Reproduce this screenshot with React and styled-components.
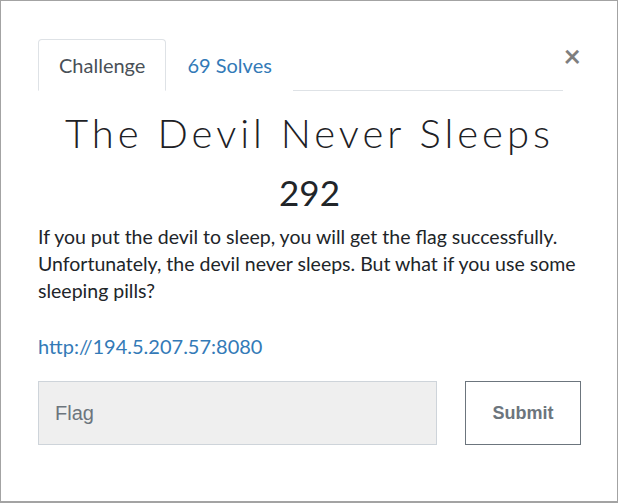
import React from "react";
import styled, { createGlobalStyle } from "styled-components";

const Global = createGlobalStyle`
  html, body { margin: 0; padding: 0; background: #fff; }
  body { font-family: Lato, "Open Sans", sans-serif; color: #212529; }
  * { box-sizing: border-box; }
`;

const Modal = styled.div`
  width: 618px;
  height: 503px;
  border: 1px solid #a3a3a3;
  border-bottom-width: 2px;
  padding: 38px 36px 0 37px;
  background: #fff;
`;

const HeaderRow = styled.div`
  display: flex;
  align-items: flex-start;
`;

const Tabs = styled.nav`
  flex: 1;
  display: flex;
  border-bottom: 1px solid #dee2e6;
`;

const Tab = styled.a`
  display: block;
  padding: 10px 20px;
  font-size: 20px;
  line-height: 30px;
  border: 1px solid ${(p) => (p.$active ? "#dee2e6" : "transparent")};
  border-bottom-color: ${(p) => (p.$active ? "#fff" : "transparent")};
  border-radius: 4px 4px 0 0;
  margin-bottom: -1px;
  color: ${(p) => (p.$active ? "#495057" : "#337ab7")};
  background: #fff;
  text-decoration: none;
  cursor: pointer;
`;

const Close = styled.button`
  width: 18px;
  margin-top: 1px;
  padding: 0;
  border: 0;
  background: transparent;
  font-family: Lato, sans-serif;
  font-size: 30px;
  font-weight: 700;
  line-height: 30px;
  color: #000;
  opacity: 0.5;
  text-align: right;
  cursor: pointer;
`;

const Title = styled.h2`
  margin: 18px 0 14px;
  text-align: center;
  font-family: Lato, sans-serif;
  font-weight: 300;
  font-size: 40px;
  line-height: 48px;
  letter-spacing: 4px;
  color: #1d2125;
`;

const Value = styled.h3`
  margin: 0;
  text-align: center;
  font-weight: 400;
  font-size: 35px;
  line-height: 42px;
  color: #212529;
`;

const Desc = styled.p`
  margin: 10px 0 29px;
  font-size: 19.5px;
  line-height: 27px;
  color: #212529;
`;

const Link = styled.a`
  display: block;
  font-size: 20px;
  line-height: 27px;
  color: #337ab7;
  text-decoration: none;
`;

const FormRow = styled.form`
  display: flex;
  justify-content: space-between;
  margin-top: 21px;
`;

const Input = styled.input`
  width: 399px;
  height: 64px;
  padding: 0 16px;
  background: #efefef;
  border: 1px solid #ced4da;
  font-family: "Liberation Sans", Arial, sans-serif;
  font-size: 20px;
  color: #495057;
  outline: none;
  &::placeholder { color: #6c757d; }
`;

const Button = styled.button`
  width: 116px;
  height: 64px;
  background: #fff;
  border: 1px solid #6c757d;
  border-radius: 0;
  font-family: "Liberation Sans", Arial, sans-serif;
  font-weight: 700;
  font-size: 18px;
  color: #6c757d;
  cursor: pointer;
`;

export default function App() {
  return (
    <>
      <Global />
      <Modal>
        <HeaderRow>
          <Tabs>
            <Tab $active>Challenge</Tab>
            <Tab>69 Solves</Tab>
          </Tabs>
          <Close aria-label="Close">×</Close>
        </HeaderRow>
        <Title>The Devil Never Sleeps</Title>
        <Value>292</Value>
        <Desc>
          If you put the devil to sleep, you will get the flag successfully.
          Unfortunately, the devil never sleeps. But what if you use some
          sleeping pills?
        </Desc>
        <Link href="#">http://194.5.207.57:8080</Link>
        <FormRow onSubmit={(e) => e.preventDefault()}>
          <Input placeholder="Flag" />
          <Button type="submit">Submit</Button>
        </FormRow>
      </Modal>
    </>
  );
}
